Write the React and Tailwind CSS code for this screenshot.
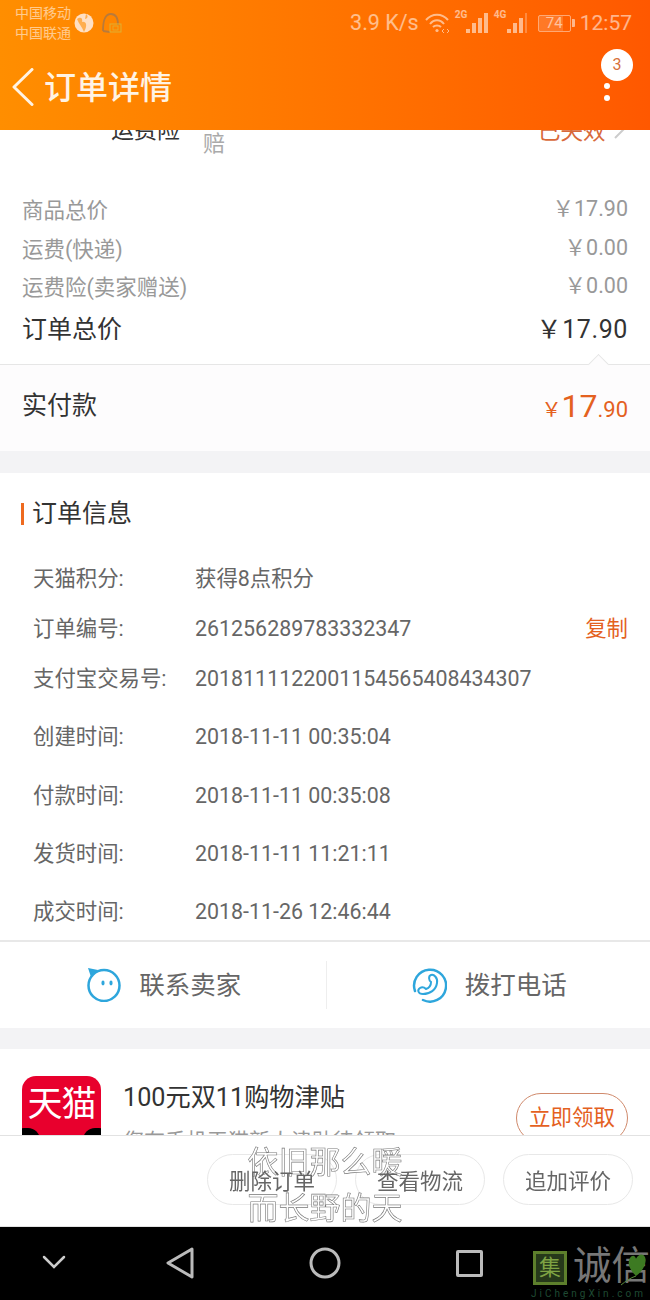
import React from 'react'

const cjk = { fontFamily: 'Roboto, "Noto Sans CJK SC", sans-serif' }
const yen = '\uFFE5'

const priceRows = [
  ['商品总价', '17.90'],
  ['运费(快递)', '0.00'],
  ['运费险(卖家赠送)', '0.00'],
]

const infoRows = [
  ['天猫积分:', '获得8点积分', 'h-[50px]'],
  ['订单编号:', '261256289783332347', 'h-[50px]'],
  ['支付宝交易号:', '2018111122001154565408434307', 'h-[50px]'],
  ['创建时间:', '2018-11-11 00:35:04', 'h-[58.4px] mt-[3.5px]'],
  ['付款时间:', '2018-11-11 00:35:08', 'h-[58.4px]'],
  ['发货时间:', '2018-11-11 11:21:11', 'h-[58.4px]'],
  ['成交时间:', '2018-11-26 12:46:44', 'h-[56.5px] pt-[1px]'],
]

const Signal = ({ label, last }) => (
  <div className="relative flex h-[20px] w-[33px] items-end justify-end gap-[2.5px]">
    <span className="absolute left-0 top-[-3px] text-[10px] font-bold leading-none">{label}</span>
    <i className="h-[4px] w-[3.5px] bg-white/55" />
    <i className="h-[10px] w-[3.5px] bg-white/55" />
    <i className="h-[15px] w-[3.5px] bg-white/55" />
    <i className={last ? 'h-[20px] w-[3.5px] bg-white/55' : 'h-[20px] w-[1.5px] bg-white/25'} />
  </div>
)

const StatusBar = () => (
  <div className="flex h-[46px] items-center pl-[15px] pr-[18px] text-white/55">
    <div className="mt-[-1px] text-[14px] leading-[20px]">
      <div>中国移动</div>
      <div>中国联通</div>
    </div>
    <svg width="20" height="20" viewBox="0 0 20 20" className="ml-[3px]">
      <circle cx="10" cy="10" r="9.5" fill="#ffe0c4" />
      <path d="M3 6 C7 3 9 6 8 9 C12 8 14 12 10 19 C8 14 5 11 3 6Z" fill="#ff8c00" opacity="0.6" />
      <path d="M12 1 C15 3 13 6 11 6Z" fill="#ff8c00" opacity="0.6" />
    </svg>
    <svg width="22" height="24" viewBox="0 0 22 24" fill="none" className="ml-[7px]">
      <path d="M2 20 C2 12 3 3 10 3 C16 3 17 9 17 14" stroke="#b97a3a" strokeWidth="1.8" />
      <path d="M2 20 L9 21" stroke="#b97a3a" strokeWidth="1.8" />
      <rect x="9" y="13" width="11" height="8" stroke="#e0b030" strokeWidth="1" />
      <rect x="12" y="15" width="5" height="4" stroke="#e0b030" strokeWidth="0.8" />
    </svg>
    <div className="ml-auto text-[21.5px] leading-none">3.9 K/s</div>
    <svg width="25" height="22" viewBox="0 0 25 22" fill="none" stroke="currentColor" strokeWidth="2" className="ml-[6px]">
      <path d="M1 8 C7 1 17 1 23 8" />
      <path d="M5 12 C9 7 15 7 19 12" />
      <path d="M8 15 C10 13 14 13 16 15" />
      <circle cx="12" cy="18.5" r="1.6" fill="currentColor" stroke="none" />
      <path d="M19 17 l-2 2 l2 2 M22 17 l2 2 l-2 2" strokeWidth="1" />
    </svg>
    <div className="ml-[5px]"><Signal label="2G" last /></div>
    <div className="ml-[6px]"><Signal label="4G" /></div>
    <div className="relative ml-[11px] flex h-[17px] w-[33px] items-center justify-center rounded-[2px] border border-white/45 text-[15px] leading-none">
      <div className="absolute inset-y-0 left-0 w-[24px] bg-white/15" />
      <span className="relative">74</span>
    </div>
    <div className="ml-[1px] h-[8px] w-[3px] rounded-r-[1px] bg-white/55" />
    <div className="ml-[5px] text-[21px] leading-none">12:57</div>
  </div>
)

const NavBar = () => (
  <div className="relative flex h-[84px] items-start pl-[12px] pt-[22px] text-[#fff3e4]">
    <svg width="22" height="38" viewBox="0 0 22 38" fill="none" stroke="currentColor" strokeWidth="3" strokeLinecap="round" strokeLinejoin="round">
      <path d="M20 1.5 L2 19 L20 36.5" />
    </svg>
    <div className="ml-[10px] text-[32px] font-medium leading-[40px]">订单详情</div>
    <div className="absolute right-[17px] top-[3px] flex h-[32px] w-[32px] items-center justify-center rounded-full bg-white text-[16px] text-[#d8703a]">3</div>
    <div className="absolute right-[40px] top-[37px] h-[6px] w-[6px] rounded-full bg-white" />
    <div className="absolute right-[40px] top-[49px] h-[6px] w-[6px] rounded-full bg-white" />
  </div>
)

const Prices = () => (
  <div className="bg-white">
    <div className="relative h-[61px] overflow-hidden">
      <div className="absolute left-[111px] top-[-13px] text-[23px] leading-[28px] text-[#333]">运费险</div>
      <div className="absolute left-[203px] top-[0px] text-[22px] leading-[28px] text-[#aaa]">赔</div>
      <div className="absolute left-[538px] top-[-13px] text-[22.5px] leading-[28px] text-[#d8693a]">已失效</div>
      <svg className="absolute left-[612px] top-[-6px]" width="14" height="16" viewBox="0 0 14 16" fill="none" stroke="#ccc" strokeWidth="2">
        <path d="M4 0 L12 5 L3 14" />
      </svg>
    </div>
    <div className="px-[22px]">
      {priceRows.map(([label, value]) => (
        <div key={label} className="flex h-[38.5px] items-center justify-between text-[21.5px] text-[#999]">
          <span className="pt-[2px]">{label}</span>
          <span className="pb-[2px]">{yen}{value}</span>
        </div>
      ))}
      <div className="flex h-[43px] items-center justify-between pt-[3px] text-[25px] text-[#333]">
        <span>订单总价</span>
        <span className="tracking-[0.6px]">{yen}17.90</span>
      </div>
    </div>
    <div className="relative mt-[14px] h-[87px] border-t border-[#e6e6e6] bg-[#fdfcfd]">
      <div className="absolute right-[44px] top-[-11px] h-[15px] w-[15px] translate-y-[3px] rotate-45 border-l border-t border-[#e6e6e6] bg-[#fdfcfd]" />
      <div className="flex h-full items-center justify-between px-[22px] pb-[4px]">
        <span className="text-[25px] text-[#333]">实付款</span>
        <div className="flex items-baseline text-[#e4611f]">
          <span className="text-[20px]">{yen}</span>
          <span className="text-[32px]">17</span>
          <span className="text-[22px]">.90</span>
        </div>
      </div>
    </div>
  </div>
)

const OrderInfo = () => (
  <div className="bg-white">
    <div className="flex h-[82px] items-center pl-[21px]">
      <div className="h-[22px] w-[3px] bg-[#ee6a1f]" />
      <div className="ml-[8px] text-[25px] text-[#333]">订单信息</div>
    </div>
    <div className="pl-[33px] pr-[22px]">
      {infoRows.map(([label, value, h]) => (
        <div key={label} className={`flex items-center text-[21.4px] text-[#666] ${h}`}>
          <span className="w-[162px]">{label}</span>
          <span>{value}</span>
          {label === '订单编号:' && <span className="ml-auto text-[#e4611f]">复制</span>}
        </div>
      ))}
    </div>
  </div>
)

const Contact = () => (
  <div className="flex h-[88px] items-center border-t-2 border-[#e8e8e8] bg-white text-[25.5px] text-[#666]">
    <div className="flex flex-1 items-center justify-center gap-[18px] pl-[3px]">
      <svg width="34" height="35" viewBox="0 0 34 35" fill="none">
        <circle cx="17" cy="18.5" r="15.5" stroke="#2ea6dc" strokeWidth="2.5" />
        <path d="M1 1 L11 3 L4 10 Z" fill="#2ea6dc" />
        <ellipse cx="16" cy="16" rx="1.6" ry="2.4" fill="#2ea6dc" />
        <ellipse cx="24" cy="16" rx="1.6" ry="2.4" fill="#2ea6dc" />
      </svg>
      <span>联系卖家</span>
    </div>
    <div className="h-[48px] w-[1px] bg-[#eee]" />
    <div className="flex flex-1 items-center justify-center gap-[18px] pl-[1px]">
      <svg width="36" height="36" viewBox="0 0 36 36" fill="none" stroke="#2ea6dc" strokeWidth="2.5" strokeLinecap="round">
        <path d="M4 24 A16 16 0 1 1 12 33" />
        <path d="M20 8 C23 7 27 11 26 16 C25 23 19 27 12 27 C7 27 6 23 9 21 C12 19 14 21 15 22 C18 21 20 18 20 15 C18 14 17 9 20 8Z" strokeWidth="2" strokeLinejoin="round" />
      </svg>
      <span>拨打电话</span>
    </div>
  </div>
)

const Promo = () => (
  <div className="relative h-[87px] overflow-hidden bg-white">
    <div className="absolute left-[22px] top-[27px] h-[80px] w-[79px] overflow-hidden rounded-[14px] bg-[#e8002d]">
      <div className="absolute left-[-10px] top-[52px] h-[24px] w-[28px] rounded-full bg-black" />
      <div className="absolute right-[-10px] top-[52px] h-[24px] w-[28px] rounded-full bg-black" />
      <div className="relative pt-[7px] text-center text-[35px] leading-[44px] tracking-[-1px] text-white">天猫</div>
    </div>
    <div className="absolute left-[123px] top-[32px] text-[25.2px] leading-[34px] text-[#333]">100元双11购物津贴</div>
    <div className="absolute left-[123px] top-[78px] text-[21px] leading-[28px] text-[#999]">您有手机天猫新人津贴待领取</div>
    <div className="absolute right-[22px] top-[44px] flex h-[50px] w-[112px] items-center justify-center rounded-full border border-[#d08a6c] text-[21.5px] text-[#e4611f]">立即领取</div>
  </div>
)

const ActionBar = () => (
  <div className="relative flex h-[92px] items-center justify-end gap-[18px] border-y border-[#e2e2e2] bg-white pb-[3px] pr-[17px] text-[21.5px] text-[#666]">
    {['删除订单', '查看物流', '追加评价'].map((t) => (
      <div key={t} className="flex h-[51px] w-[130px] items-center justify-center rounded-full border border-[#e8e8e8] pt-[5px]">
        <span className="relative z-10">{t}</span>
      </div>
    ))}
    <div className="absolute left-0 right-0 top-[4px] text-center text-[31px] leading-[46px] text-white [will-change:transform] [-webkit-text-stroke:0.6px_#777]">
      <div>依旧那么暖</div>
      <div>而长野的天</div>
    </div>
  </div>
)

const SystemNav = () => (
  <div className="relative h-[73px] bg-black">
    <svg className="absolute left-[42px] top-[27px]" width="24" height="16" viewBox="0 0 24 16" fill="none" stroke="#ccc" strokeWidth="2.5" strokeLinecap="round">
      <path d="M2 3 L12 13 L22 3" />
    </svg>
    <svg className="absolute left-[166px] top-[20px]" width="28" height="32" viewBox="0 0 28 32" fill="none" stroke="#bbb" strokeWidth="3" strokeLinejoin="round">
      <path d="M26 2 L2 16 L26 30 Z" />
    </svg>
    <svg className="absolute left-[309px] top-[20px]" width="32" height="32" viewBox="0 0 32 32" fill="none" stroke="#bbb" strokeWidth="3">
      <circle cx="16" cy="16" r="14" />
    </svg>
    <div className="absolute left-[456px] top-[23px] h-[27px] w-[27px] rounded-[2px] border-[3px] border-[#bbb]" />
    <div className="absolute left-[533px] top-[24px] flex h-[34px] w-[34px] items-center justify-center border-[3px] border-[#5d7f2c] bg-[#26391a] text-[22px] leading-none text-[#7ea343]">集</div>
    <div className="absolute left-[573px] top-[19px] whitespace-nowrap text-[38.5px] leading-[40px] text-[#777]">诚信</div>
    <svg className="absolute left-[618px] top-[25px]" width="30" height="34" viewBox="0 0 30 34">
      <path d="M18 24 C11 17 9 11 12 6 C14 3 17 3 18 7 C20 2 25 1 27 5 C29 10 26 18 18 24Z" fill="#3d7a22" />
      <path d="M18 24 C12 26 8 29 3 33" stroke="#5a8a3a" strokeWidth="1" fill="none" />
    </svg>
    <div className="absolute left-[531px] top-[62px] whitespace-nowrap text-[10px] leading-none tracking-[3px] text-[#1f4a33]">JiChengXin.com</div>
  </div>
)

export default function App() {
  return (
    <div className="flex h-[1300px] w-[650px] flex-col overflow-hidden bg-[#f3f3f5]" style={cjk}>
      <div className="h-[130px] shrink-0 bg-gradient-to-r from-[#ff8e00] to-[#ff5800]">
        <StatusBar />
        <NavBar />
      </div>
      <div className="h-[1005px] shrink-0 overflow-hidden">
        <Prices />
        <div className="h-[22px]" />
        <OrderInfo />
        <Contact />
        <div className="h-[21px]" />
        <Promo />
      </div>
      <ActionBar />
      <SystemNav />
    </div>
  )
}
